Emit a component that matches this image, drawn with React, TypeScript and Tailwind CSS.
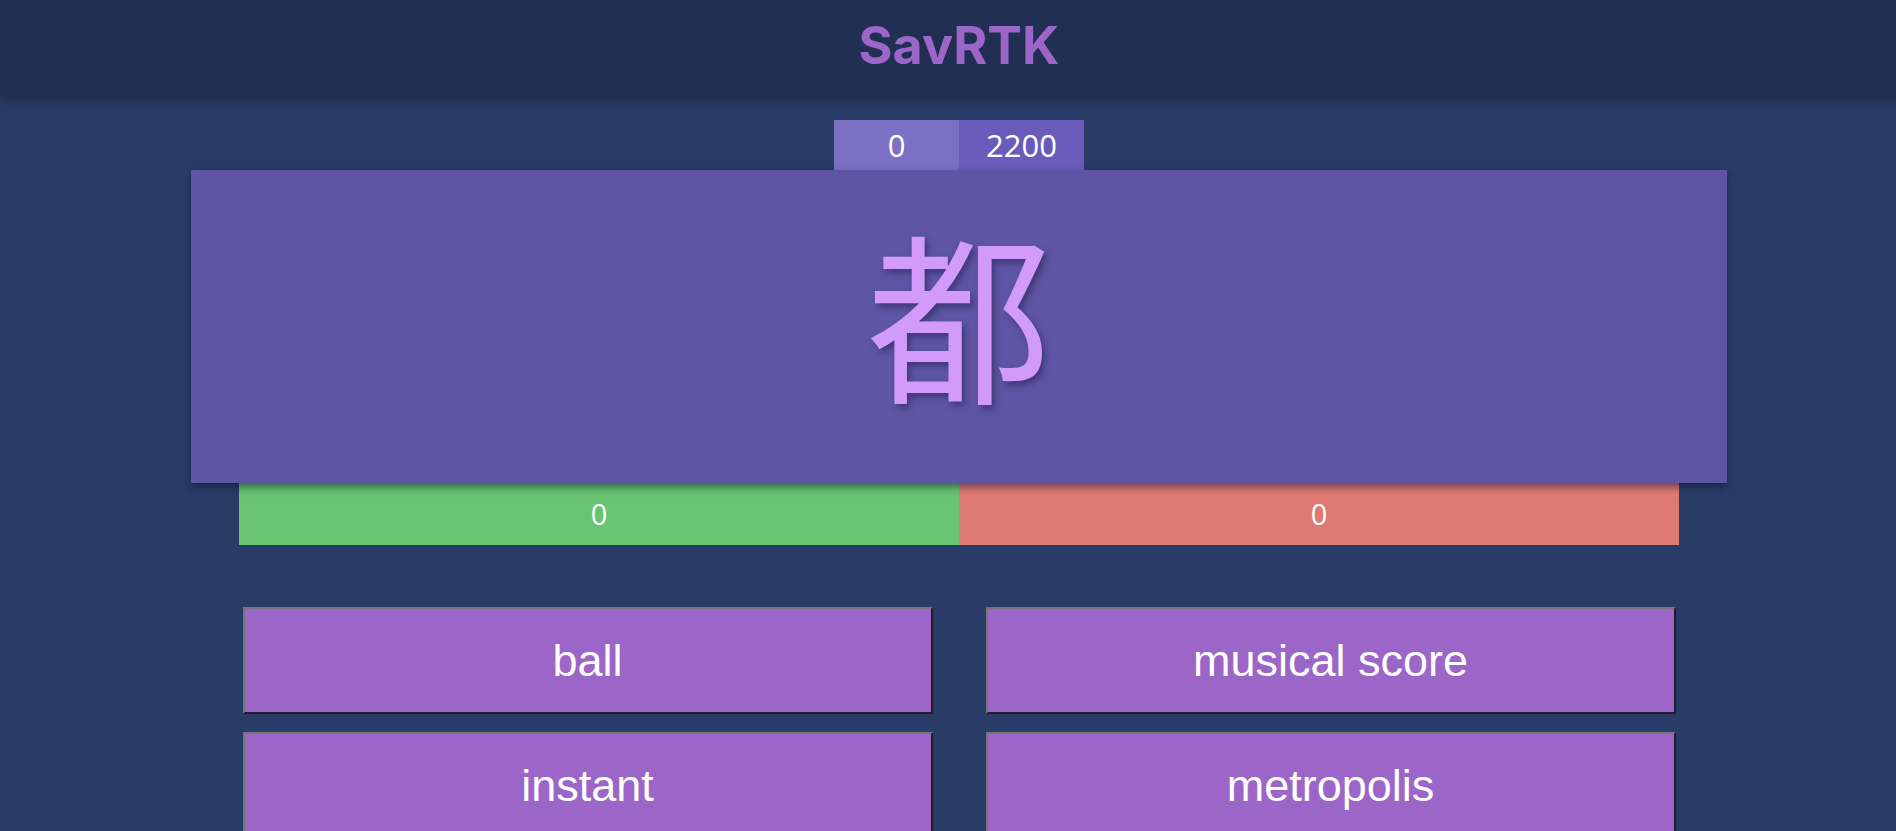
const answers = ["ball", "musical score", "instant", "metropolis"];

export default function App() {
  return (
    <div className="min-h-[831px] w-full overflow-hidden bg-[#293c67]">
      <div className="w-[1918px] flex flex-col items-center">
        <header className="w-full h-[95px] bg-[#212f52] flex items-center justify-center shadow-[0_4px_8px_rgba(20,28,50,0.6)] relative z-10">
          <h1 className="text-[52px] font-bold text-[#9c66c8] font-['Inter','Open_Sans',sans-serif] -mt-[4px]">
            SavRTK
          </h1>
        </header>

        {/* score counter */}
        <div className="mt-[25px] flex text-white text-[31px] font-['Open_Sans',sans-serif]">
          <div className="w-[125px] h-[50px] flex items-center justify-center bg-[#7b70c4]">0</div>
          <div className="w-[125px] h-[50px] flex items-center justify-center bg-[#6a5bbb]">2200</div>
        </div>

        {/* kanji card */}
        <div className="w-[1536px] h-[313px] bg-[#5e56a4] flex items-center justify-center shadow-[0_4px_8px_rgba(15,20,45,0.55)] relative z-10">
          <span className="text-[184px] leading-none text-[#d39bf9] font-['Noto_Sans_CJK_JP',sans-serif] [text-shadow:3px_4px_6px_rgba(40,30,90,0.55)] -mt-[34px]">
            都
          </span>
        </div>

        {/* right / wrong bar */}
        <div className="w-[1440px] h-[62px] flex text-white text-[29px] font-['Open_Sans',sans-serif]">
          <div className="flex-1 bg-[#68c471] flex items-center justify-center">0</div>
          <div className="flex-1 bg-[#df7a73] flex items-center justify-center">0</div>
        </div>

        {/* answer buttons */}
        <div className="mt-[62px] w-[1433px] grid grid-cols-2 gap-x-[53px] gap-y-[18px]">
          {answers.map((a) => (
            <button
              key={a}
              className="h-[107px] bg-[#9c66c8] text-white text-[45px] font-['Liberation_Sans',Arial,sans-serif] border-2 border-t-[#767676] border-l-[#767676] border-b-[#26192f] border-r-[#26192f]"
            >
              {a}
            </button>
          ))}
        </div>
      </div>
    </div>
  );
}
